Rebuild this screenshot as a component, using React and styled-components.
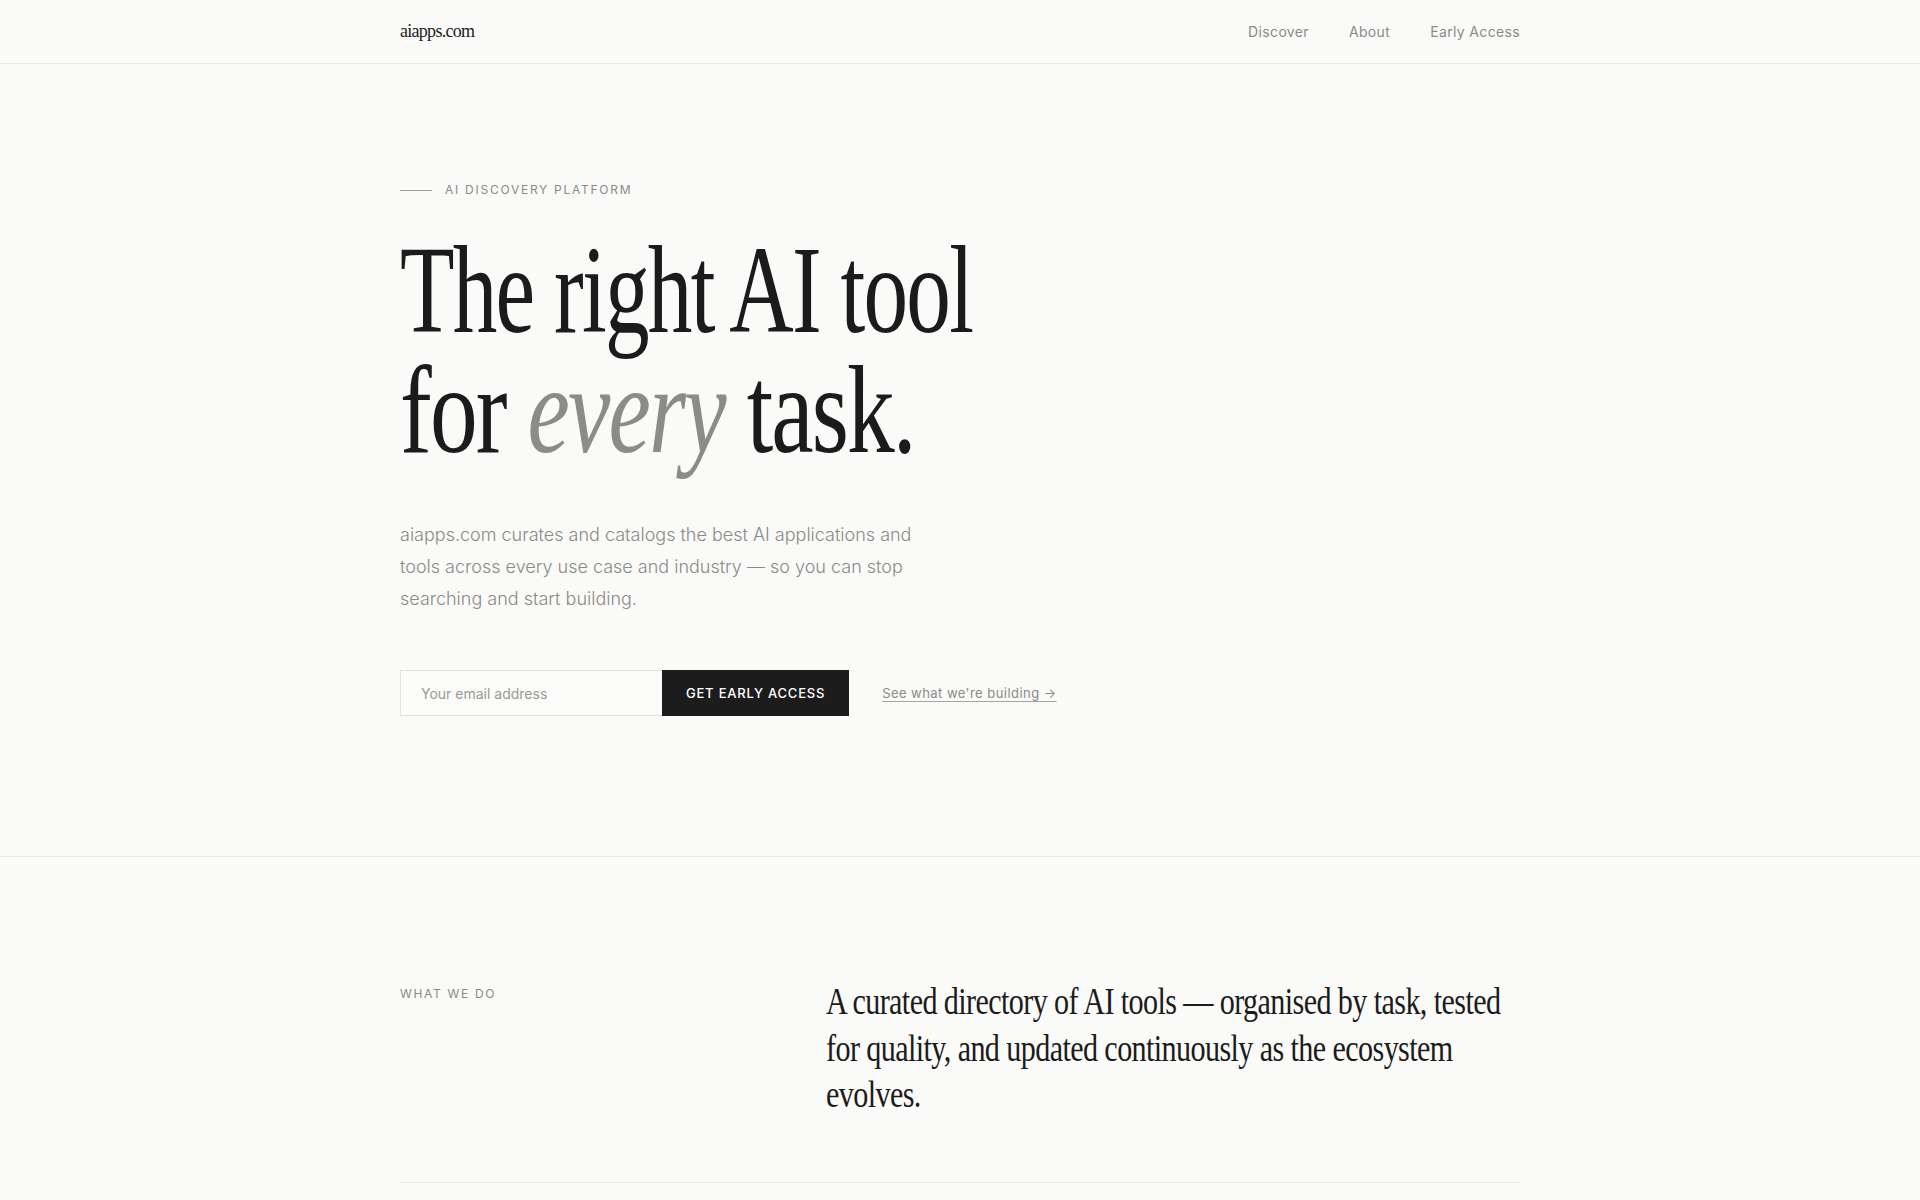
import React from "react";
import styled, { createGlobalStyle } from "styled-components";

const GlobalStyle = createGlobalStyle`
  * { box-sizing: border-box; }
  html, body {
    margin: 0;
    padding: 0;
    background: #fafaf8;
    color: #1b1b1b;
    font-family: Inter, "Liberation Sans", sans-serif;
    -webkit-font-smoothing: antialiased;
  }
`;

const Page = styled.div`
  min-height: 100vh;
  background: #fafaf8;
`;

const Container = styled.div`
  width: 1120px;
  margin: 0 auto;
`;

const NavBar = styled.header`
  height: 64px;
  border-bottom: 1px solid #e6e6e2;
`;

const NavInner = styled(Container)`
  height: 100%;
  display: flex;
  align-items: center;
  justify-content: space-between;
`;

const Logo = styled.a`
  font-family: "Liberation Serif", serif;
  font-size: 18px;
  letter-spacing: -0.04em;
  color: #1b1b1b;
  text-decoration: none;
`;

const NavLinks = styled.nav`
  display: flex;
  gap: 40px;
`;

const NavLink = styled.a`
  font-size: 14px;
  letter-spacing: 0.025em;
  color: #8a8a86;
  text-decoration: none;
`;

const Hero = styled.section`
  padding: 118px 0 140px;
  border-bottom: 1px solid #e6e6e2;
`;

const Eyebrow = styled.div`
  display: flex;
  align-items: center;
  gap: 13px;
  margin-bottom: 33px;
  font-size: 12px;
  line-height: 16px;
  letter-spacing: 0.145em;
  color: #8a8a86;
  text-transform: uppercase;

  &::before {
    content: "";
    width: 32px;
    height: 1px;
    background: #9a9a96;
  }
`;

const Headline = styled.h1`
  margin: 0;
  font-family: "Liberation Serif", serif;
  font-weight: 400;
  font-size: 124px;
  line-height: 120px;
  letter-spacing: -0.02em;
  white-space: nowrap;
  color: #1b1b1b;

  em {
    color: #8c8c86;
    font-style: italic;
  }
`;

const HeadLine = styled.span`
  display: block;
  transform: scaleX(${(p) => p.$scale});
  transform-origin: left top;
`;

const Lead = styled.p`
  margin: 48px 0 0;
  max-width: 520px;
  font-size: 18px;
  font-weight: 300;
  line-height: 32px;
  color: #8a8a86;
`;

const SignupRow = styled.form`
  display: flex;
  align-items: center;
  margin-top: 55px;
`;

const EmailInput = styled.input`
  width: 262px;
  height: 46px;
  padding: 0 20px;
  border: 1px solid #e2e2de;
  border-right: none;
  background: #fbfbfa;
  font-family: Inter, sans-serif;
  font-size: 14px;
  color: #1b1b1b;
  outline: none;

  &::placeholder {
    color: #9a9a96;
  }
`;

const SubmitButton = styled.button`
  height: 46px;
  padding: 0 23px;
  border: 1px solid #1c1c1c;
  background: #1c1c1c;
  color: #fff;
  font-family: Inter, sans-serif;
  font-size: 13px;
  font-weight: 500;
  letter-spacing: 0.06em;
  cursor: pointer;
`;

const TextLink = styled.a`
  margin-left: 33px;
  font-size: 13px;
  letter-spacing: 0.035em;
  color: #8a8a86;
  text-decoration: underline;
  text-underline-offset: 3px;
  text-decoration-color: #a5a5a0;
`;

const About = styled.section`
  padding-top: 121px;
`;

const AboutRow = styled(Container)`
  display: grid;
  grid-template-columns: 362px 1fr;
  column-gap: 64px;
  padding-bottom: 64px;
  border-bottom: 1px solid #e6e6e2;
`;

const Label = styled.div`
  padding-top: 8px;
  font-size: 12px;
  line-height: 16px;
  letter-spacing: 0.14em;
  color: #8a8a86;
  text-transform: uppercase;
`;

const Statement = styled.p`
  margin: 0;
  font-family: "Liberation Serif", serif;
  font-size: 38px;
  line-height: 46.5px;
  letter-spacing: -0.02em;
  white-space: nowrap;
  color: #1b1b1b;
  transform: scaleX(0.793);
  transform-origin: left top;
`;

export default function App() {
  return (
    <Page>
      <GlobalStyle />
      <NavBar>
        <NavInner>
          <Logo href="#">aiapps.com</Logo>
          <NavLinks>
            <NavLink href="#">Discover</NavLink>
            <NavLink href="#">About</NavLink>
            <NavLink href="#">Early Access</NavLink>
          </NavLinks>
        </NavInner>
      </NavBar>

      <Hero>
        <Container>
          <Eyebrow>AI Discovery Platform</Eyebrow>
          <Headline>
            <HeadLine $scale={0.72}>The right AI tool</HeadLine>
            <HeadLine $scale={0.77}>
              for <em>every</em> task.
            </HeadLine>
          </Headline>
          <Lead>
            aiapps.com curates and catalogs the best AI applications and tools
            across every use case and industry — so you can stop searching and
            start building.
          </Lead>
          <SignupRow onSubmit={(e) => e.preventDefault()}>
            <EmailInput type="email" placeholder="Your email address" />
            <SubmitButton type="submit">GET EARLY ACCESS</SubmitButton>
            <TextLink href="#">See what we're building →</TextLink>
          </SignupRow>
        </Container>
      </Hero>

      <About>
        <AboutRow>
          <Label>What we do</Label>
          <Statement>
            A curated directory of AI tools — organised by task, tested
            <br />
            for quality, and updated continuously as the ecosystem
            <br />
            evolves.
          </Statement>
        </AboutRow>
      </About>
    </Page>
  );
}
